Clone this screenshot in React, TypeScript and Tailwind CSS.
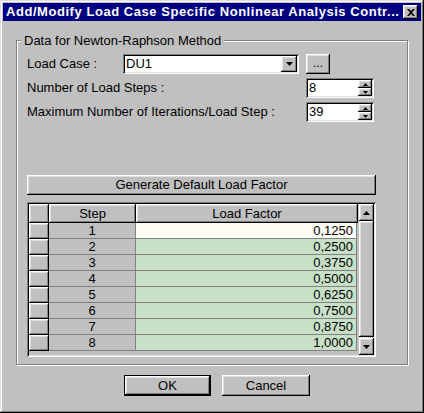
import React from "react";

const FONT = { fontFamily: '"Liberation Sans", Arial, sans-serif' };

const raised =
  "bg-[#c0c0c0] shadow-[inset_-1px_-1px_0_#000,inset_1px_1px_0_#fff,inset_-2px_-2px_0_#808080,inset_2px_2px_0_#dfdfdf]";
const sunken =
  "shadow-[inset_1px_1px_0_#808080,inset_-1px_-1px_0_#fff,inset_2px_2px_0_#000,inset_-2px_-2px_0_#dfdfdf]";

const FACTORS = ["0,1250", "0,2500", "0,3750", "0,5000", "0,6250", "0,7500", "0,8750", "1,0000"];

function Triangle({ up = false, size = 7 }: { up?: boolean; size?: number }) {
  const h = Math.ceil(size / 2);
  return (
    <svg width={size} height={h} viewBox={`0 0 ${size} ${h}`} className="block">
      <polygon points={up ? `0,${h} ${size},${h} ${size / 2},0` : `0,0 ${size},0 ${size / 2},${h}`} fill="#000" />
    </svg>
  );
}

function SpinBox({ value }: { value: string }) {
  return (
    <div className={`flex h-[20px] w-[68px] bg-white p-[2px] ${sunken}`}>
      <div className="flex-1 pl-[1px] text-[13px] leading-[16px] text-black">{value}</div>
      <div className="flex w-[14px] flex-col">
        <div className={`flex h-[8px] items-center justify-center ${raised}`}>
          <Triangle up size={5} />
        </div>
        <div className={`flex h-[8px] items-center justify-center ${raised}`}>
          <Triangle size={5} />
        </div>
      </div>
    </div>
  );
}

export default function App() {
  return (
    <div
      style={FONT}
      className="flex h-[413px] w-[424px] flex-col bg-[#c0c0c0] p-[3px] text-[12px] text-black shadow-[inset_-1px_-1px_0_#000,inset_1px_1px_0_#dfdfdf,inset_-2px_-2px_0_#808080,inset_2px_2px_0_#fff]"
    >
      {/* title bar */}
      <div className="flex h-[18px] items-center bg-[#000080] pl-[3px] pr-[3px]">
        <span className="min-w-0 flex-1 overflow-hidden whitespace-nowrap text-[13px] font-bold tracking-[0.55px] text-white">
          Add/Modify Load Case Specific Nonlinear Analysis Contr...
        </span>
        <button className={`flex h-[14px] w-[15px] shrink-0 items-center justify-center ${raised}`}>
          <svg width="8" height="7" viewBox="0 0 8 7">
            <path d="M0 0h2l2 2 2-2h2L5 3.5 8 7H6L4 5 2 7H0l3-3.5z" fill="#000" />
          </svg>
        </button>
      </div>

      {/* group box */}
      <div className="relative ml-[13px] mt-[19px] h-[325px] w-[392px] border border-[#808080] pl-[10px] pt-[13px] shadow-[1px_1px_0_#fff,inset_1px_1px_0_#fff]">
        <span className="absolute left-[4px] top-[-8px] bg-[#c0c0c0] px-[3px] text-[13px] leading-[15px]">
          Data for Newton-Raphson Method
        </span>

        <div className="flex h-[20px] items-center">
          <span className="w-[96px] text-[13px]">Load Case :</span>
          <div className={`flex h-[20px] w-[176px] bg-white p-[2px] ${sunken}`}>
            <div className="flex-1 pl-[1px] text-[13px] leading-[16px]">DU1</div>
            <div className={`flex w-[16px] items-center justify-center ${raised}`}>
              <Triangle size={7} />
            </div>
          </div>
          <button className={`ml-[7px] flex h-[20px] w-[24px] items-end justify-center pb-[5px] text-[12px] leading-none ${raised}`}>
            ...
          </button>
        </div>

        <div className="mt-[4px] flex h-[20px] items-center">
          <span className="w-[279px] text-[13px]">Number of Load Steps :</span>
          <SpinBox value="8" />
        </div>
        <div className="mt-[4px] flex h-[20px] items-center">
          <span className="w-[279px] text-[13px]">Maximum Number of Iterations/Load Step :</span>
          <SpinBox value="39" />
        </div>

        <button className={`mt-[53px] block h-[20px] w-[349px] text-[13px] ${raised}`}>
          Generate Default Load Factor
        </button>

        {/* grid */}
        <div className={`mt-[7px] flex h-[155px] w-[349px] bg-[#c0c0c0] p-[2px] ${sunken}`}>
          <div className="flex w-[329px] flex-col text-[13px]">
            <div className="flex h-[19px]">
              <div className={`w-[20px] ${raised}`} />
              <div className={`w-[87px] text-center leading-[19px] ${raised}`}>Step</div>
              <div className={`w-[222px] text-center leading-[19px] ${raised}`}>Load Factor</div>
            </div>
            {FACTORS.map((f, i) => (
              <div key={f} className="flex h-[16px]">
                <div className={`w-[20px] ${raised}`} />
                <div className="w-[87px] border-b border-r border-[#808080] text-center leading-[15px]">{i + 1}</div>
                <div
                  className={`w-[221px] border-b border-r border-[#808080] pr-[3px] text-right leading-[15px] ${
                    i === 0 ? "bg-[#fffbf5]" : "bg-[#c8e0c8]"
                  }`}
                >
                  {f}
                </div>
              </div>
            ))}
          </div>
          <div className="ml-[1px] flex w-[15px] flex-col">
            <div className={`flex h-[17px] items-center justify-center ${raised}`}>
              <Triangle up size={7} />
            </div>
            <div className={`flex-1 ${raised}`} />
            <div className="h-[1px] border-t border-dotted border-white" />
            <div className={`flex h-[17px] items-center justify-center ${raised}`}>
              <Triangle size={7} />
            </div>
          </div>
        </div>
      </div>

      {/* buttons */}
      <div className="ml-[121px] mt-[10px] flex gap-[11px]">
        <div className="h-[21px] w-[87px] border border-black">
          <button className={`h-full w-full text-[13px] ${raised}`}>OK</button>
        </div>
        <button className={`h-[21px] w-[88px] text-[13px] ${raised}`}>Cancel</button>
      </div>
    </div>
  );
}
